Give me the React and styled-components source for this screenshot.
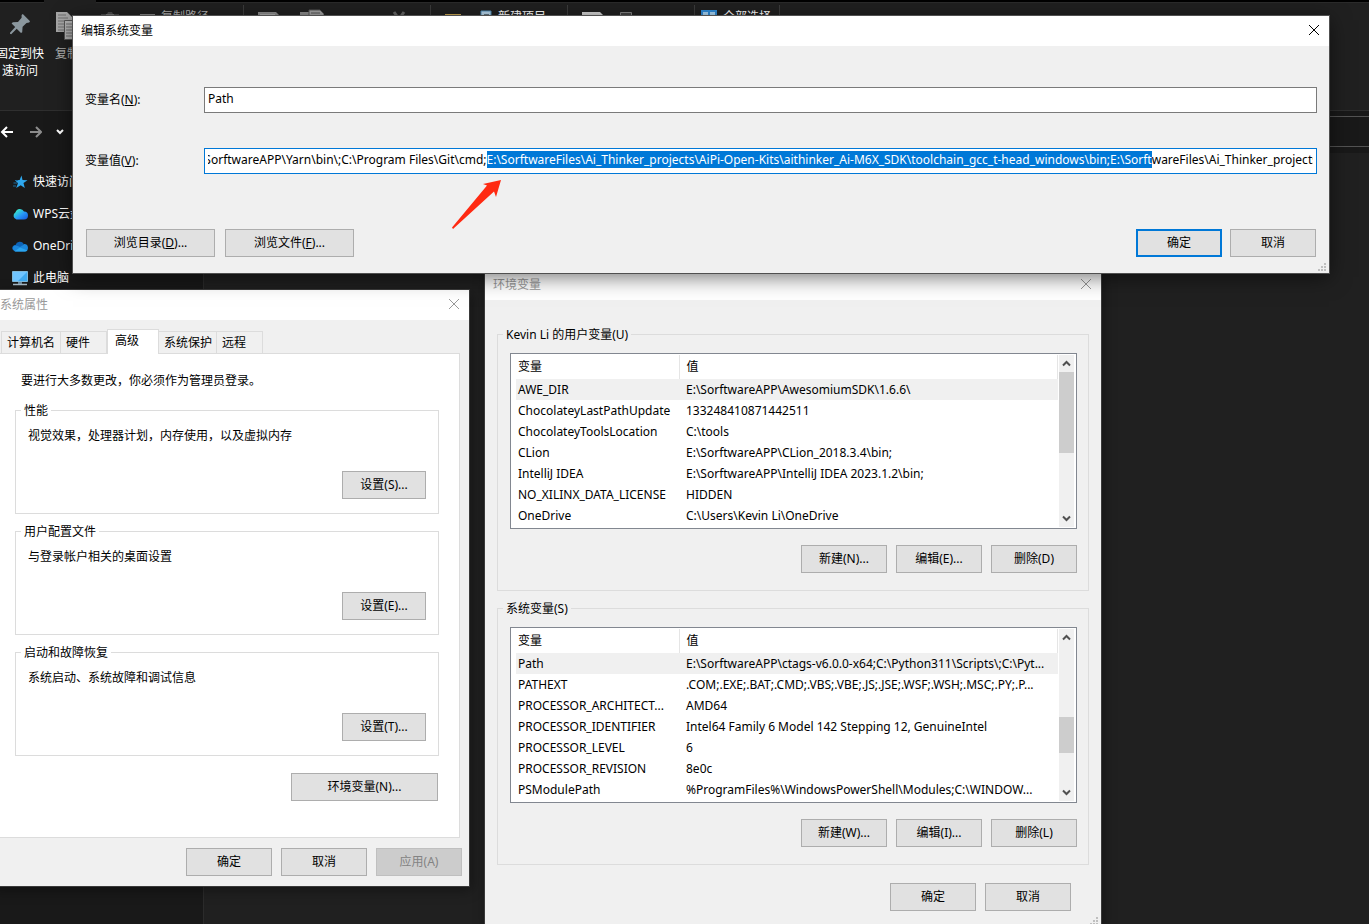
import React, { useEffect, useRef } from "react";
import styled, { createGlobalStyle, ThemeProvider } from "styled-components";

const theme = {
  colors: {
    face: "#f0f0f0",
    button: "#e1e1e1",
    buttonBorder: "#adadad",
    blue: "#0078d7",
    line: "#dcdcdc",
    ribbon: "#202020",
    nav: "#191919",
  },
};

const GlobalStyle = createGlobalStyle`
  * { box-sizing: border-box; }
  body { margin: 0; background: #202020; }
  body, button, input, table {
    font-family: "Noto Sans", "Noto Sans CJK SC", sans-serif;
    font-size: 12px;
    line-height: 16px;
  }
`;

const Desktop = styled.div`
  position: relative;
  display: flex;
  flex-direction: column;
  height: 100vh;
  overflow: hidden;
  background: ${({ theme }) => theme.colors.ribbon};
  color: #fff;
`;

/* explorer */
const TabStrip = styled.div`
  flex: none;
  height: 3px;
  background: #000;
  border-bottom: 1px solid #2b2b2b;
  padding-left: 44px;
  & > div {
    width: 52px;
    height: 3px;
    background: ${({ theme }) => theme.colors.ribbon};
  }
`;
const Ribbon = styled.div`
  flex: none;
  display: flex;
  height: 108px;
  padding-top: 2px;
  border-bottom: 1px solid #2f2f2f;
`;
const RibbonGroup = styled.div`
  display: flex;
  align-items: flex-start;
  flex: none;
  width: ${({ $width }) => $width}px;
  height: 96px;
  padding-left: ${({ $indent }) => $indent || 0}px;
  gap: ${({ $gap }) => $gap || 0}px;
  border-right: 1px solid #3c3c3c;
`;
const RibbonButton = styled.button`
  display: flex;
  flex-direction: column;
  align-items: center;
  gap: 4px;
  flex: none;
  width: ${({ $width }) => $width}px;
  padding: 4px 0 0;
  border: 0;
  background: none;
  color: ${({ $dim }) => ($dim ? "#b0b0b0" : "#fff")};
  line-height: 17px;
  white-space: nowrap;
`;
const SmallCommand = styled.button`
  display: flex;
  align-items: center;
  gap: 6px;
  padding: 4px 0 0;
  border: 0;
  background: none;
  color: ${({ $dim }) => ($dim ? "#b0b0b0" : "#fff")};
  white-space: nowrap;
`;
const NavBar = styled.div`
  flex: none;
  display: flex;
  height: 42px;
  padding: 5px 0 6px;
  background: ${({ theme }) => theme.colors.nav};
`;
const NavButtons = styled.div`
  display: flex;
  align-items: center;
  width: 80px;
  & > button {
    display: flex;
    padding: 0;
    border: 0;
    background: none;
  }
  & > button + button { margin-left: 14px; }
`;
const AddressBar = styled.div`
  flex: 1;
  border: 1px solid #535353;
  border-right: 0;
`;
const ExplorerBody = styled.div`
  flex: 1;
  display: flex;
`;
const Sidebar = styled.nav`
  width: 204px;
  padding-top: 13px;
  background: ${({ theme }) => theme.colors.nav};
  border-right: 1px solid #2b2b2b;
`;
const SideLink = styled.a`
  display: flex;
  align-items: center;
  gap: 5px;
  height: 32px;
  padding-left: 12px;
  color: #fff;
  text-decoration: none;
  white-space: nowrap;
`;

/* windows */
const Window = styled.section`
  position: absolute;
  background: ${({ theme }) => theme.colors.face};
  color: #000;
`;
const SystemWindow = styled(Window)`
  left: -8px;
  top: 290px;
  width: 477px;
  box-shadow: 0 0 0 1px #3a3a3a, 2px 4px 12px rgba(0, 0, 0, 0.4);
`;
const EnvWindow = styled(Window)`
  left: 485px;
  top: 270px;
  width: 616px;
  box-shadow: 0 0 0 1px #3a3a3a, 2px 4px 12px rgba(0, 0, 0, 0.4);
`;
const EditWindow = styled(Window)`
  left: 73px;
  right: 40px;
  top: 16px;
  box-shadow: 0 0 0 1px #505050, 0 4px 20px rgba(0, 0, 0, 0.55);
`;
const TitleBar = styled.header`
  display: flex;
  align-items: center;
  justify-content: space-between;
  height: 30px;
  padding: 0 8px;
  background: #fff;
  color: ${({ $active }) => ($active ? "#000" : "#999")};
  & > button {
    display: flex;
    padding: 0 1px 2px;
    border: 0;
    background: none;
    color: inherit;
  }
`;
const PushButton = styled.button`
  flex: none;
  width: ${({ $width }) => $width || 86}px;
  height: 28px;
  padding: 0;
  border: ${({ $primary, theme }) =>
    $primary ? `2px solid ${theme.colors.blue}` : `1px solid ${theme.colors.buttonBorder}`};
  background: ${({ theme }) => theme.colors.button};
  color: #000;
  &:disabled {
    background: #ccc;
    border-color: #bfbfbf;
    color: #838383;
  }
`;
const ButtonRow = styled.div`
  display: flex;
  justify-content: flex-end;
  gap: ${({ $gap }) => $gap || 9}px;
`;
const Group = styled.fieldset`
  min-width: 0;
  margin: 0;
  padding: 0 0 0 5px;
  border: 1px solid ${({ theme }) => theme.colors.line};
  & > legend {
    padding: 0 3px;
    line-height: 15px;
  }
`;
const Grip = styled.svg`
  position: absolute;
  right: 3px;
  bottom: 2px;
`;

const SystemBody = styled.div`
  padding: 9px 7px 10px;
`;
const Tabs = styled.div`
  display: flex;
  align-items: flex-end;
  padding-left: 2px;
`;
const Tab = styled.button`
  width: ${({ $width }) => $width}px;
  height: ${({ $selected }) => ($selected ? 25 : 22)}px;
  margin-bottom: ${({ $selected }) => ($selected ? "-1px" : 0)};
  padding: 0 0 ${({ $selected }) => ($selected ? "2px 7px" : "0 5px")};
  border: 1px solid ${({ theme }) => theme.colors.line};
  border-bottom: 0;
  border-left-width: ${({ $joined }) => ($joined ? 0 : 1)}px;
  background: ${({ $selected, theme }) => ($selected ? "#fff" : theme.colors.face)};
  color: #000;
  text-align: left;
  white-space: nowrap;
  z-index: ${({ $selected }) => ($selected ? 1 : 0)};
`;
const TabPanel = styled.div`
  margin-right: 2px;
  padding: 19px 20px 36px 15px;
  border: 1px solid ${({ theme }) => theme.colors.line};
  background: #fff;
  & > p { margin: 0 0 14px 6px; }
  & > fieldset { margin-bottom: 10px; }
`;
const SettingBody = styled.div`
  padding: 10px 12px 14px 7px;
  & > p { margin: 0 0 27px; }
`;
const EnvButtonRow = styled(ButtonRow)`
  padding: 7px 1px 0 0;
`;
const SystemFooter = styled(ButtonRow)`
  padding-top: 10px;
`;

const EnvBody = styled.div`
  padding: 27px 12px 16px;
  & > fieldset { margin-bottom: 10px; }
`;
const VariableBody = styled.div`
  padding: 11px 11px 17px 7px;
`;
const EnvFooter = styled(ButtonRow)`
  padding: 8px 18px 0 0;
`;
const ListBox = styled.div`
  display: flex;
  height: 176px;
  margin-bottom: 16px;
  padding: 1px 2px 1px 5px;
  border: 1px solid #828790;
  background: #fff;
`;
const VariableTable = styled.table`
  flex: 1;
  align-self: flex-start;
  width: 0;
  table-layout: fixed;
  border-collapse: collapse;
  th, td {
    height: 21px;
    padding: 0 0 0 7px;
    font-weight: 400;
    text-align: left;
    white-space: nowrap;
    overflow: hidden;
  }
  th { height: 24px; border-right: 1px solid #e5e5e5; }
  th:first-child { width: 163px; }
  th:first-child, td:first-child { padding-left: 2px; }
`;
const VariableRow = styled.tr`
  background: ${({ $selected, theme }) => ($selected ? theme.colors.face : "transparent")};
`;
const ScrollBar = styled.div`
  display: flex;
  flex-direction: column;
  width: 15px;
  margin-left: 1px;
  background: ${({ theme }) => theme.colors.face};
  & > button {
    display: flex;
    align-items: center;
    justify-content: center;
    height: 17px;
    padding: 0;
    border: 0;
    background: none;
  }
`;
const Track = styled.div`
  flex: 1;
  padding-top: ${({ $offset }) => $offset}px;
  & > div {
    height: ${({ $size }) => $size}px;
    background: #cdcdcd;
  }
`;

const EditForm = styled.form`
  display: flex;
  flex-direction: column;
  padding: 41px 12px 16px;
`;
const Field = styled.div`
  display: flex;
  align-items: center;
  margin-bottom: 35px;
  & > label { flex: none; width: 119px; }
  & > input {
    flex: 1;
    min-width: 0;
    height: 26px;
    padding: 0 3px 4px;
    border: 1px solid #7a7a7a;
    background: #fff;
    color: #000;
    outline: 0;
  }
  & > input:focus { border-color: ${({ theme }) => theme.colors.blue}; }
  & > input::selection {
    background: ${({ theme }) => theme.colors.blue};
    color: #fff;
  }
`;
const EditFooter = styled.div`
  display: flex;
  justify-content: space-between;
  padding: 20px 1px 0;
`;
const Arrow = styled.svg`
  position: absolute;
  left: 378px;
  top: 162px;
`;

const CloseIcon = () => (
  <svg width="12" height="12" viewBox="0 0 12 12" fill="none" stroke="currentColor">
    <path d="M1 1l10 10M11 1L1 11" />
  </svg>
);

const Chevron = ({ down }) => (
  <svg width="9" height="7" viewBox="0 0 9 7" fill="none" stroke="#505050" strokeWidth="2">
    <path d={down ? "M1 1.5l3.5 3.5L8 1.5" : "M1 5.5L4.5 2 8 5.5"} />
  </svg>
);

const SizeGrip = () => (
  <Grip width="8" height="8" viewBox="0 0 8 8" fill="#bfbfbf">
    <path d="M6 0h2v2H6zM3 3h2v2H3zM6 3h2v2H6zM0 6h2v2H0zM3 6h2v2H3zM6 6h2v2H6z" />
  </Grip>
);

const PinIcon = () => (
  <svg width="32" height="32" viewBox="0 0 32 32" fill="#8b979e">
    <path d="M18.800 5L26 12.300L25.200 13.500L22.500 14L18.600 17.800L18.200 23.200L17 24L12.700 19.800L7.200 25.200L6 24.800L6 23.800L11.200 18L7.600 14.400L8.800 13.300L14 12.900L17.600 8.800L17.600 6Z" />
  </svg>
);

const CopyIcon = () => (
  <svg width="36" height="32" viewBox="-4 0 36 32">
    <path d="M3 3h11l5 5v15H3z" fill="#a6a6a6" />
    <path d="M5 6h8M5 9h10M5 12h10M5 15h10M5 18h10M5 21h10" stroke="#6e6e6e" />
    <path d="M11.500 11.500h11l5 5v14h-16z" fill="#b4b4b4" stroke="#555" />
    <path d="M13 15h8M13 18h11M13 21h11M13 24h11M13 27h11" stroke="#6e6e6e" />
  </svg>
);

const PasteIcon = () => (
  <svg width="32" height="32" viewBox="0 0 32 32">
    <path d="M7 5h6l1-2h4l1 2h6v26H7z" fill="#4a4a4a" />
    <path d="M12 5h8v2h-8z" fill="#777" />
  </svg>
);

const SheetIcon = ({ color = "#8b8b8b" }) => (
  <svg width="22" height="24" viewBox="0 0 22 24">
    <path d="M0 3h18l4 4v17H0z" fill={color} />
    <path d="M2 6h15" stroke="#d0d0d0" />
  </svg>
);

const SheetsIcon = () => (
  <svg width="24" height="24" viewBox="0 0 24 24">
    <path d="M0 3h10l3 3v16H0z" fill="#8b8b8b" />
    <path d="M9 1h11l4 4v16H9z" fill="#a2a2a2" stroke="#555" />
    <path d="M11 4h9" stroke="#555" />
  </svg>
);

const PathIcon = () => (
  <svg width="15" height="14" viewBox="0 0 15 14">
    <path d="M0 4h15v8H0z" fill="#858585" />
    <path d="M2 7h11" stroke="#d0d0d0" />
  </svg>
);

const DeleteIcon = () => (
  <svg width="12" height="24" viewBox="-9 0 12 24" overflow="visible" fill="none" stroke="#666" strokeWidth="3">
    <path d="M1 3l10 14M11 3L1 17" />
  </svg>
);

const OpenIcon = () => (
  <svg width="12" height="14" viewBox="0 0 12 14">
    <path d="M.5 3.500h11v9H.5z" fill="#444" stroke="#848484" />
  </svg>
);

const FolderIcon = () => (
  <svg width="17" height="24" viewBox="0 0 17 24">
    <path d="M0 5h16v15H0z" fill="#cda954" />
  </svg>
);

const NewItemIcon = () => (
  <svg width="12" height="14" viewBox="0 0 12 14">
    <path d="M1 1h10v12H1z" fill="#b8d5ea" stroke="#4e8db7" />
    <path d="M4 4h5v7H4z" fill="#5f7480" />
  </svg>
);

const SelectAllIcon = () => (
  <svg width="16" height="14" viewBox="0 0 16 14" fill="#a8d4f4" stroke="#2f8bd8" strokeWidth="2">
    <path d="M1 1h7v6H1zM8 1h7v6H8zM1 7h7v6H1zM8 7h7v6H8z" />
  </svg>
);

const NavArrow = ({ color, back }) => (
  <svg width="14" height="12" viewBox="0 0 14 12" fill="none" stroke={color} strokeWidth="2">
    <path d={back ? "M7 1L2 6l5 5M2 6h11" : "M8 1l5 5-5 5M13 6H2"} />
  </svg>
);

const StarIcon = () => (
  <svg width="16" height="16" viewBox="0 0 16 16">
    <path d="M9.500 1.500L10.500 6L15.500 6.200L11.500 9L12.800 14L8.700 11.200L4.200 14L6 9.200L3 6.200L7.600 6Z" fill="#2ea7ed" />
    <path d="M3 6.500h3M1.500 9h4M1 12h3" stroke="#1a6ca0" />
  </svg>
);

const WpsIcon = () => (
  <svg width="16" height="16" viewBox="0 0 16 16">
    <defs>
      <linearGradient id="wps" x1="0" x2="1" y1="0" y2="1">
        <stop offset="0.200" stopColor="#36dfce" />
        <stop offset="0.550" stopColor="#2798f7" />
        <stop offset="1" stopColor="#1555dc" />
      </linearGradient>
    </defs>
    <path d="M4.500 13.500A4 4 0 0 1 3.500 6.200A4.600 4.600 0 0 1 12 5.500A4 4 0 0 1 12 13.500Z" fill="url(#wps)" />
  </svg>
);

const OneDriveIcon = () => (
  <svg width="16" height="16" viewBox="0 0 16 16">
    <path d="M3.500 7A4.500 4.500 0 0 1 11.800 6L8 10L1 12A3 3 0 0 1 3.500 7Z" fill="#0d64b8" />
    <path d="M3.500 13.500A3.200 3.200 0 0 1 2.500 7.600Q5 7 8 9L12 6A3.800 3.800 0 0 1 13 13.500Z" fill="#1b87dc" />
    <path d="M2.500 13.300L8 9.500L15.500 12.500Q14.500 13.500 13 13.500H3.500Z" fill="#2ba5ef" />
  </svg>
);

const ComputerIcon = () => (
  <svg width="16" height="16" viewBox="0 0 16 16">
    <path d="M.5 1.500h15v10H.5z" fill="#40a9ef" stroke="#7fb9da" />
    <path d="M1 2h14L6 11H1z" fill="#70c5ff" />
    <path d="M6 12h4v2H6z" fill="#69869a" />
    <path d="M1 14.500h14" stroke="#a5b8c5" strokeWidth="1.500" />
  </svg>
);

const settings = [
  { title: "性能", text: "视觉效果，处理器计划，内存使用，以及虚拟内存", button: "设置(S)..." },
  { title: "用户配置文件", text: "与登录帐户相关的桌面设置", button: "设置(E)..." },
  { title: "启动和故障恢复", text: "系统启动、系统故障和调试信息", button: "设置(T)..." },
];

const userVariables = [
  ["AWE_DIR", "E:\\SorftwareAPP\\AwesomiumSDK\\1.6.6\\"],
  ["ChocolateyLastPathUpdate", "133248410871442511"],
  ["ChocolateyToolsLocation", "C:\\tools"],
  ["CLion", "E:\\SorftwareAPP\\CLion_2018.3.4\\bin;"],
  ["IntelliJ IDEA", "E:\\SorftwareAPP\\IntelliJ IDEA 2023.1.2\\bin;"],
  ["NO_XILINX_DATA_LICENSE", "HIDDEN"],
  ["OneDrive", "C:\\Users\\Kevin Li\\OneDrive"],
];

const systemVariables = [
  ["Path", "E:\\SorftwareAPP\\ctags-v6.0.0-x64;C:\\Python311\\Scripts\\;C:\\Pyt..."],
  ["PATHEXT", ".COM;.EXE;.BAT;.CMD;.VBS;.VBE;.JS;.JSE;.WSF;.WSH;.MSC;.PY;.P..."],
  ["PROCESSOR_ARCHITECT...", "AMD64"],
  ["PROCESSOR_IDENTIFIER", "Intel64 Family 6 Model 142 Stepping 12, GenuineIntel"],
  ["PROCESSOR_LEVEL", "6"],
  ["PROCESSOR_REVISION", "8e0c"],
  ["PSModulePath", "%ProgramFiles%\\WindowsPowerShell\\Modules;C:\\WINDOW..."],
];

const before = "E:\\SorftwareAPP\\Yarn\\bin\\;C:\\Program Files\\Git\\cmd;";
const selected =
  "E:\\SorftwareFiles\\Ai_Thinker_projects\\AiPi-Open-Kits\\aithinker_Ai-M6X_SDK\\toolchain_gcc_t-head_windows\\bin;E:\\Sorft";
const after = "wareFiles\\Ai_Thinker_projects";

const Explorer = () => (
  <>
    <TabStrip><div /></TabStrip>
    <Ribbon>
      <RibbonGroup $width={244} $gap={7}>
        <RibbonButton $width={40}><PinIcon /><span>固定到快<br />速访问</span></RibbonButton>
        <RibbonButton $width={40} $dim><CopyIcon />复制</RibbonButton>
        <RibbonButton $width={32} $dim aria-label="粘贴"><PasteIcon /></RibbonButton>
        <div />
        <SmallCommand $dim><PathIcon />复制路径</SmallCommand>
      </RibbonGroup>
      <RibbonGroup $width={187} $indent={14} $gap={20}>
        <SmallCommand aria-label="移动到"><SheetIcon /></SmallCommand>
        <SmallCommand aria-label="复制到"><SheetsIcon /></SmallCommand>
        <div />
        <div />
        <SmallCommand aria-label="删除"><DeleteIcon /></SmallCommand>
      </RibbonGroup>
      <RibbonGroup $width={137} $indent={14} $gap={18}>
        <SmallCommand aria-label="新建文件夹"><FolderIcon /></SmallCommand>
        <SmallCommand><NewItemIcon />新建项目</SmallCommand>
      </RibbonGroup>
      <RibbonGroup $width={127} $indent={14} $gap={16}>
        <SmallCommand aria-label="属性"><SheetIcon color="#d4d4d4" /></SmallCommand>
        <SmallCommand aria-label="打开"><OpenIcon /></SmallCommand>
      </RibbonGroup>
      <RibbonGroup $width={85} $indent={6}>
        <SmallCommand><SelectAllIcon />全部选择</SmallCommand>
      </RibbonGroup>
    </Ribbon>
    <NavBar>
      <NavButtons>
        <button aria-label="后退"><NavArrow back color="#fff" /></button>
        <button aria-label="前进"><NavArrow color="#8c8c8c" /></button>
        <button aria-label="最近">
          <svg width="8" height="6" viewBox="0 0 8 6" fill="none" stroke="#fff" strokeWidth="2">
            <path d="M1 1l3 3 3-3" />
          </svg>
        </button>
      </NavButtons>
      <AddressBar />
    </NavBar>
    <ExplorerBody>
      <Sidebar>
        <SideLink href="#quick"><StarIcon />快速访问</SideLink>
        <SideLink href="#wps"><WpsIcon />WPS云盘</SideLink>
        <SideLink href="#onedrive"><OneDriveIcon />OneDrive</SideLink>
        <SideLink href="#pc"><ComputerIcon />此电脑</SideLink>
      </Sidebar>
    </ExplorerBody>
  </>
);

const Title = ({ children, active }) => (
  <TitleBar $active={active}>
    <span>{children}</span>
    <button type="button" aria-label="关闭"><CloseIcon /></button>
  </TitleBar>
);

const SystemProperties = () => (
  <SystemWindow>
    <Title>系统属性</Title>
    <SystemBody>
      <Tabs role="tablist">
        <Tab role="tab" $width={60}>计算机名</Tab>
        <Tab role="tab" $width={46} $joined>硬件</Tab>
        <Tab role="tab" $width={52} $selected>高级</Tab>
        <Tab role="tab" $width={58} $joined>系统保护</Tab>
        <Tab role="tab" $width={46} $joined>远程</Tab>
      </Tabs>
      <TabPanel>
        <p>要进行大多数更改，你必须作为管理员登录。</p>
        {settings.map((s) => (
          <Group key={s.title}>
            <legend>{s.title}</legend>
            <SettingBody>
              <p>{s.text}</p>
              <ButtonRow><PushButton $width={84}>{s.button}</PushButton></ButtonRow>
            </SettingBody>
          </Group>
        ))}
        <EnvButtonRow><PushButton $width={147}>环境变量(N)...</PushButton></EnvButtonRow>
      </TabPanel>
      <SystemFooter>
        <PushButton>确定</PushButton>
        <PushButton>取消</PushButton>
        <PushButton disabled>应用(A)</PushButton>
      </SystemFooter>
    </SystemBody>
  </SystemWindow>
);

const VariableGroup = ({ title, rows, offset, size, buttons }) => (
  <Group>
    <legend>{title}</legend>
    <VariableBody>
      <ListBox>
        <VariableTable>
          <thead>
            <tr><th>变量</th><th>值</th></tr>
          </thead>
          <tbody>
            {rows.map(([name, value], i) => (
              <VariableRow key={name} $selected={i === 0}>
                <td>{name}</td>
                <td>{value}</td>
              </VariableRow>
            ))}
          </tbody>
        </VariableTable>
        <ScrollBar>
          <button aria-label="向上滚动"><Chevron /></button>
          <Track $offset={offset} $size={size}><div /></Track>
          <button aria-label="向下滚动"><Chevron down /></button>
        </ScrollBar>
      </ListBox>
      <ButtonRow>
        {buttons.map((b) => <PushButton key={b}>{b}</PushButton>)}
      </ButtonRow>
    </VariableBody>
  </Group>
);

const EnvironmentVariables = () => (
  <EnvWindow>
    <Title>环境变量</Title>
    <EnvBody>
      <VariableGroup
        title="Kevin Li 的用户变量(U)"
        rows={userVariables}
        offset={0}
        size={81}
        buttons={["新建(N)...", "编辑(E)...", "删除(D)"]}
      />
      <VariableGroup
        title="系统变量(S)"
        rows={systemVariables}
        offset={71}
        size={36}
        buttons={["新建(W)...", "编辑(I)...", "删除(L)"]}
      />
      <EnvFooter>
        <PushButton>确定</PushButton>
        <PushButton>取消</PushButton>
      </EnvFooter>
    </EnvBody>
    <SizeGrip />
  </EnvWindow>
);

const EditVariable = () => {
  const valueRef = useRef(null);

  useEffect(() => {
    const input = valueRef.current;
    input.focus({ preventScroll: true });
    input.setSelectionRange(before.length, before.length + selected.length);
    input.scrollLeft = 18;
  }, []);

  return (
    <EditWindow>
      <Title active>编辑系统变量</Title>
      <EditForm>
        <Field>
          <label htmlFor="name">变量名(<u>N</u>):</label>
          <input id="name" defaultValue="Path" />
        </Field>
        <Field>
          <label htmlFor="value">变量值(<u>V</u>):</label>
          <input id="value" ref={valueRef} spellCheck={false} defaultValue={before + selected + after} />
        </Field>
        <EditFooter>
          <ButtonRow $gap={10}>
            <PushButton type="button" $width={129}>浏览目录(<u>D</u>)...</PushButton>
            <PushButton type="button" $width={129}>浏览文件(<u>F</u>)...</PushButton>
          </ButtonRow>
          <ButtonRow $gap={8}>
            <PushButton type="button" $primary>确定</PushButton>
            <PushButton type="button">取消</PushButton>
          </ButtonRow>
        </EditFooter>
      </EditForm>
      <Arrow width="52" height="52" viewBox="0 0 52 52" fill="#ff2a12">
        <path d="M50 2L45 19L43 13.500L2 51L1 49.500L36 7.500L32 6Z" />
      </Arrow>
      <SizeGrip />
    </EditWindow>
  );
};

const App = () => (
  <ThemeProvider theme={theme}>
    <GlobalStyle />
    <Desktop>
      <Explorer />
      <SystemProperties />
      <EnvironmentVariables />
      <EditVariable />
    </Desktop>
  </ThemeProvider>
);

export default App;
